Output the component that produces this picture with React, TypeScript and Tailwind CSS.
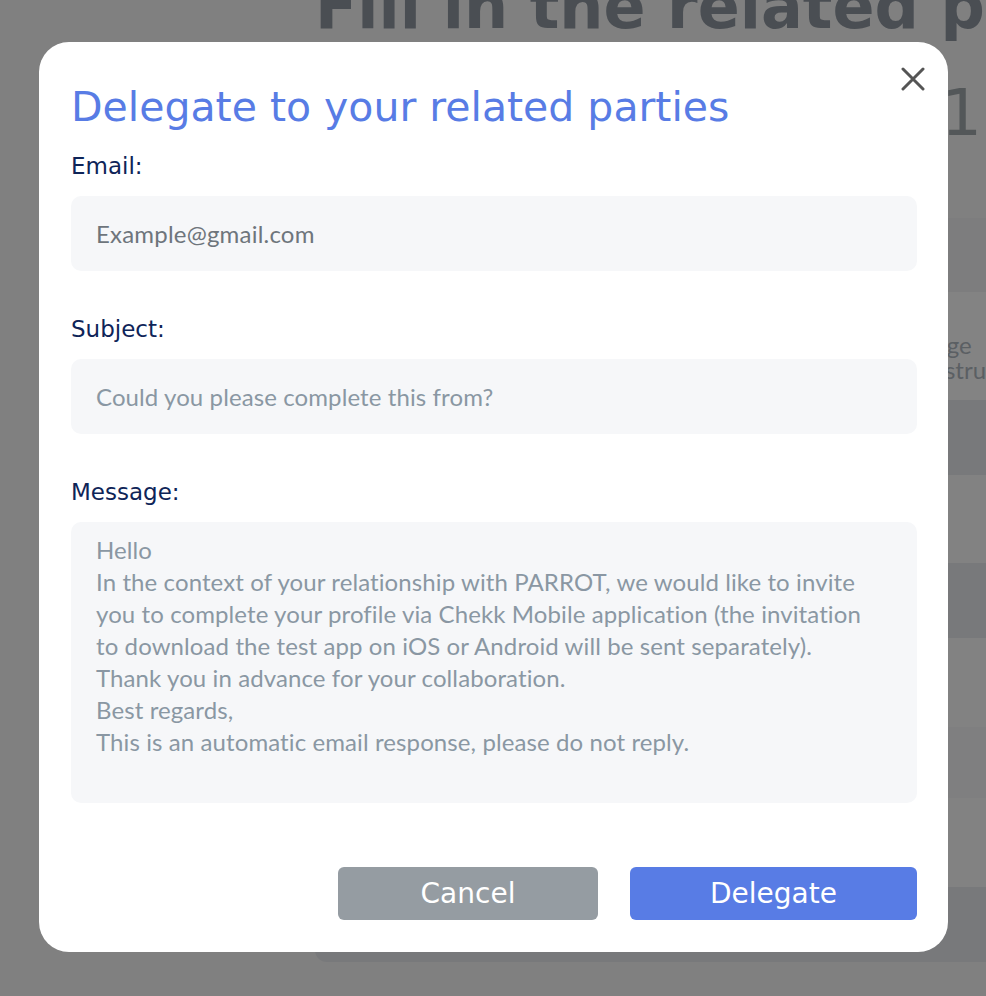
import { FC } from 'react';

// ~ ~ ~ ~ ~ ~ ~ ~ ~ ~ ~ ~ ~ ~ ~ ~ ~ ~ ~ ~ ~ ~ Background page (under the dim)

const rows = [
  'h-[74px] bg-[#7d7d7e]',
  'h-[108px] bg-[#838383]',
  'h-[75px] bg-[#78797b]',
  'h-[88px] bg-[#828282]',
  'h-[75px] bg-[#78797b]',
  'h-[89px] bg-[#828282]',
  'h-[71px] bg-[#7f7f80]',
  'h-[89px] bg-[#828282]',
  'h-[75px] bg-[#78797b]',
];

const BackPage: FC = () => (
  <div className="pl-[315px] font-['DejaVu_Sans',sans-serif]">
    <h1 className="-mt-[24px] h-[62px] whitespace-nowrap text-[62px] font-bold leading-[62px] text-[#4a4e53]">
      Fill in the related parties
    </h1>
    <div className="flex h-[180px] justify-end pr-[4px] pt-[43px]">
      <span className="text-[64px] leading-[64px] text-[#535759]">1</span>
    </div>
    <div className="overflow-hidden rounded-l-[12px]">
      {rows.map((r, i) => (
        <div key={i} className={r}>
          {i === 1 && (
            <div className="pt-[40px] font-['Lato',sans-serif] text-[24px] leading-[25px] text-[#5b5f63]">
              <div className="ml-[577px] whitespace-nowrap">Change</div>
              <div className="ml-[610px] whitespace-nowrap">Instructions</div>
            </div>
          )}
        </div>
      ))}
    </div>
  </div>
);

// ~ ~ ~ ~ ~ ~ ~ ~ ~ ~ ~ ~ ~ ~ ~ ~ ~ ~ ~ ~ ~ ~ Modal

const message = [
  'Hello',
  'In the context of your relationship with PARROT, we would like to invite',
  'you to complete your profile via Chekk Mobile application (the invitation',
  'to download the test app on iOS or Android will be sent separately).',
  'Thank you in advance for your collaboration.',
  'Best regards,',
  'This is an automatic email response, please do not reply.',
];

const Label: FC<{ text: string; first?: boolean }> = ({ text, first }) => (
  <label className={`${first ? 'mt-[19px]' : 'mt-[43px]'} block text-[23px] leading-[30px] text-[#0e2458]`}>
    {text}
  </label>
);

const DelegateModal: FC = () => (
  <div className="absolute left-[39px] top-[42px] w-[909px] rounded-[30px] bg-white pb-[32px] pl-[32px] pr-[31px] pt-[40px] font-['DejaVu_Sans',sans-serif]">
    <button className="absolute right-[23px] top-[25px] text-[#555555]" aria-label="Close">
      <svg width="24" height="24" viewBox="0 0 24 24" fill="none" stroke="currentColor" strokeWidth="3" strokeLinecap="round">
        <path d="M2 2 L22 22 M22 2 L2 22" />
      </svg>
    </button>

    <h2 className="whitespace-nowrap text-[41px] leading-[50px] text-[#587ce5]">
      Delegate to your related parties
    </h2>

    <Label text="Email:" first />
    <div className="mt-[15px] flex h-[75px] items-center rounded-[10px] bg-[#f6f7f9] px-[25px] font-['Lato',sans-serif] text-[24px] leading-[32px] tracking-[0.2px] text-[#6e757c]">
      Example@gmail.com
    </div>

    <Label text="Subject:" />
    <div className="mt-[15px] flex h-[75px] items-center rounded-[10px] bg-[#f6f7f9] px-[25px] font-['Lato',sans-serif] text-[24px] leading-[32px] tracking-[0.1px] text-[#8a97a3]">
      Could you please complete this from?
    </div>

    <Label text="Message:" />
    <div className="mt-[15px] h-[281px] rounded-[10px] bg-[#f6f7f9] px-[25px] pt-[12px] font-['Lato',sans-serif] text-[24px] leading-[32px] tracking-[0.1px] text-[#8a97a3]">
      {message.map((line) => (
        <div key={line} className="whitespace-nowrap">{line}</div>
      ))}
    </div>

    <div className="mt-[64px] flex justify-end gap-[32px]">
      <button className="h-[53px] w-[260px] rounded-[6px] bg-[#959ca2] text-[28px] text-white">
        Cancel
      </button>
      <button className="h-[53px] w-[287px] rounded-[6px] bg-[#587ce5] text-[28px] text-white">
        Delegate
      </button>
    </div>
  </div>
);

// ~ ~ ~ ~ ~ ~ ~ ~ ~ ~ ~ ~ ~ ~ ~ ~ ~ ~ ~ ~ ~ ~ App

const App: FC = () => (
  <div className="relative h-[996px] w-[986px] overflow-hidden bg-[#808080]">
    <BackPage />
    <DelegateModal />
  </div>
);

export default App;
